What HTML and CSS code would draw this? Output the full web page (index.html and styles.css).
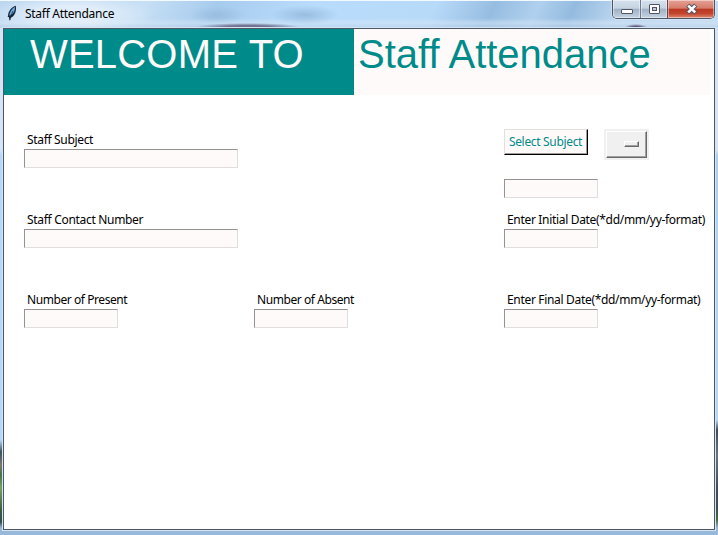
FILE: index.html
```html
<!DOCTYPE html>
<html lang="en">
<head>
<meta charset="utf-8">
<title>Staff Attendance</title>
<link rel="stylesheet" href="styles.css">
</head>
<body>
<div class="window">
  <header class="titlebar">
    <svg class="feather" width="10" height="17" viewBox="0 0 10 17">
      <path d="M8.7 .7C5.2 1.3 1 6.4 1.1 10.5L.6 11.7l1.4.6L2.8 16l1-3.2C7.8 11.3 9.9 5.2 8.7.7Z" fill="#182333"/>
      <path d="M7.8 1.8C4.7 4 2.3 7.2 2.3 10.8 5.7 9.6 8.6 6 7.8 1.8Z" fill="#6ba9e4"/>
      <path d="M6 6 3 12.5V15" fill="none" stroke="#182333" stroke-width=".7"/>
    </svg>
    <span class="caption">Staff Attendance</span>
    <div class="controls">
      <span class="control minimize"><svg width="28" height="18"><rect x="8.5" y="9.5" width="11" height="4" rx=".5" fill="#fff" stroke="#535666"/></svg></span>
      <span class="control maximize"><svg width="26" height="18"><rect x="8.5" y="4.5" width="10" height="9" rx=".5" fill="#fff" stroke="#535666"/><rect x="11.5" y="7.5" width="4" height="3" fill="#b9cbdc" stroke="#535666"/></svg></span>
      <span class="control close"><svg width="46" height="18"><path d="m19.7 5.2 8 7.6m0-7.6-8 7.6" stroke="#535666" stroke-width="4.6"/><path d="m20.2 5.6 7 6.8m0-6.8-7 6.8" stroke="#fff" stroke-width="2.6"/></svg></span>
    </div>
  </header>
  <main class="client">
    <div class="banner">
      <h1 class="welcome">WELCOME TO</h1>
      <h1 class="name">Staff Attendance</h1>
    </div>
    <div class="form">
      <div class="field"><label class="l-subject">Staff Subject</label><input class="wide"></div>
      <div></div>
      <div class="picker">
        <div class="picker-row">
          <button class="select">Select Subject</button>
          <div class="option"><div class="option-face"><i class="indicator"></i></div></div>
        </div>
        <input>
      </div>
      <div class="field"><label class="l-contact">Staff Contact Number</label><input class="wide"></div>
      <div></div>
      <div class="field"><label class="l-date">Enter Initial Date(*dd/mm/yy-format)</label><input></div>
      <div class="field"><label class="l-count">Number of Present</label><input></div>
      <div class="field"><label class="l-count">Number of Absent</label><input></div>
      <div class="field"><label class="l-date">Enter Final Date(*dd/mm/yy-format)</label><input></div>
    </div>
  </main>
</div>
</body>
</html>
```
FILE: styles.css
```css
* { box-sizing: border-box; }
body { margin: 0; overflow: hidden; font: 12px/16px "Noto Sans", "Open Sans", sans-serif; color: #000; }
.window {
  width: 718px; height: 535px; padding: 0 3px 5px;
  background:
    linear-gradient(#f4f9fd, #f4f9fd) 0 0 / 100% 1px no-repeat,
    radial-gradient(ellipse 85px 20px at 70px 14px, #e8f1fbd0 40%, #e8f1fb00) 0 0 / 100% 28px no-repeat,
    radial-gradient(ellipse 52px 4px at 248px 27px, #5d5272c0 40%, #5d527200) 0 0 / 100% 28px no-repeat,
    radial-gradient(ellipse 12px 4px at 636px 28px, #453352 20%, #45335200) 0 0 / 100% 28px no-repeat,
    radial-gradient(ellipse 28px 9px at 218px 15px, #86aacb70, #86aacb00) 0 0 / 100% 28px no-repeat,
    radial-gradient(ellipse 34px 10px at 305px 15px, #7fa5c890, #86aacb00) 0 0 / 100% 28px no-repeat,
    linear-gradient(#0000 18px, #d5e6f790 23px, #b4cce480 28px) 0 0 / 100% 28px no-repeat,
    linear-gradient(115deg, #b9d5ef 0, #c6dff5 20%, #a7cbed 30%, #b9dcfc 43%, #b8daf9 60%, #96bde1 68%, #b0d0ee 74%, #94bbdf 79%, #b8d4ee 85%, #c2daf0) 0 0 / 100% 28px no-repeat,
    linear-gradient(#99b9da, #99b9da) 0 100% / 100% 5px no-repeat,
    linear-gradient(#d5e5f7 0, #d5e5f7 150px, #b4d8fa 155px, #b4d8fa 440px, #3e5158 452px, #7d796b 465px, #45734d 475px, #75a35d 488px, #3f5b45 510px, #315048 522px, #99b9da 528px) 0 0 / 4px 100% no-repeat,
    linear-gradient(#d5e5f7 0, #d5e5f7 150px, #a9d1f8 155px, #b4d8fa 420px, #414b59 430px, #647486 455px, #424c5b 490px, #3d4e56 507px, #456b3d 520px, #99b9da 528px) 100% 0 / 4px 100% no-repeat;
}
.titlebar { height: 28px; display: flex; align-items: flex-start; padding-left: 4px; }
.feather { margin-top: 5px; }
.caption { margin: 6px 0 0 8px; letter-spacing: -.28px; white-space: nowrap; }
.controls {
  display: flex; height: 19px; width: 103px; margin-left: auto;
  border: 1px solid #4d5566; border-top: 0; border-radius: 0 0 5px 5px; overflow: hidden;
  box-shadow: 0 0 0 1px #dfeefb90;
}
.control { height: 18px; background: linear-gradient(#d5e1ed, #c5d3e1 46%, #9fb1c4 50%, #c3d3e2); box-shadow: inset 0 0 0 1px #ffffff70; }
.control svg { display: block; }
.minimize { width: 28px; border-right: 1px solid #6f7b8c; }
.maximize { width: 27px; border-right: 1px solid #684047; }
.close { width: 46px; background: linear-gradient(#e5a295, #d67b6a 46%, #b93822 50%, #c2452e 75%, #df8b71); }
.client {
  height: 502px; width: 712px; background: #fff;
  border: 1px solid #4c5866; box-shadow: 0 0 0 1px #d4e4f3;
}
.banner { display: flex; width: 706px; height: 66px; }
.banner h1 { margin: 0; font: 40px/46px "Liberation Sans", Arial, sans-serif; white-space: nowrap; height: 66px; padding-top: 2px; }
.welcome { width: 350px; padding-left: 26px; background: #008b8b; color: #fffafa; }
.name { width: 356px; padding-left: 4px; background: #fffafa; color: #008b8b; }
.banner .welcome { letter-spacing: .2px; }
.form { display: grid; grid-template-columns: 230px 250px 206px; grid-template-rows: repeat(3, 80px); padding: 34px 0 0 20px; }
label { display: block; height: 20px; padding: 3px 0 0 3px; white-space: nowrap; }
input {
  display: block; width: 94px; height: 19px; margin: 0; padding: 0; outline: 0; border-radius: 0;
  background: #fffafa; border: 1px solid; border-color: #969292 #e3dede #e3dede #969292;
}
input.wide { width: 214px; }
.picker-row { display: flex; height: 50px; gap: 16px; }
.select {
  width: 84px; height: 26px; padding: 0 1px 0 0; margin: 0; font: inherit; color: #008b8b; white-space: nowrap;
  letter-spacing: -.33px; background: #fffafa; border: 1px solid; border-color: #e3dfdf #000 #000 #e3dfdf;
  border-radius: 0; box-shadow: inset -1px -1px #a09c9c;
}
.option { width: 45px; height: 31px; padding: 2px; background: #f0f0f0; }
.option-face {
  width: 41px; height: 27px; display: flex; padding: 9px 0 0 17px;
  border: 1px solid; border-color: #fff #696969 #696969 #fff; box-shadow: inset -1px -1px #a0a0a0;
}
.indicator { width: 15px; height: 6px; border: 1px solid; border-color: #fff #696969 #696969 #fff; box-shadow: inset -1px -1px #a0a0a0; }
.l-subject { letter-spacing: -.33px; }
.l-contact { letter-spacing: -.31px; }
.l-date { letter-spacing: -.32px; }
.l-count { letter-spacing: -.43px; }
```
